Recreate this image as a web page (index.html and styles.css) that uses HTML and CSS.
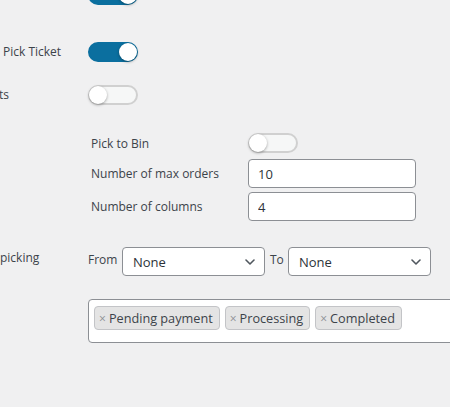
FILE: index.html
```html
<!DOCTYPE html>
<html>
<head>
<meta charset="utf-8">
<link rel="stylesheet" href="styles.css">
</head>
<body>
<div class="page">
  <div class="row row-top">
    <div class="label"></div>
    <div class="ctl"><span class="toggle on"></span></div>
  </div>
  <div class="row row-b">
    <div class="label label-pick">Pick Ticket</div>
    <div class="ctl"><span class="toggle on"></span></div>
  </div>
  <div class="row row-c">
    <div class="label label-ts">ts</div>
    <div class="ctl"><span class="toggle"></span></div>
  </div>
  <div class="row row-d">
    <div class="label"></div>
    <div class="ctl">
      <div class="sub">
        <div class="sub-label first">Pick to Bin</div>
        <div class="sub-ctl first"><span class="toggle"></span></div>
        <div class="sub-label">Number of max orders</div>
        <div class="sub-ctl"><input class="text" type="text" value="10"></div>
        <div class="sub-label">Number of columns</div>
        <div class="sub-ctl"><input class="text" type="text" value="4"></div>
      </div>
    </div>
  </div>
  <div class="row row-e">
    <div class="label label-picking">picking</div>
    <div class="ctl range">
      <span class="range-label from">From</span>
      <div class="select"><span>None</span>
        <svg class="chev" width="10" height="6" viewBox="0 0 10 6"><path d="M1 1 L5 5 L9 1" fill="none" stroke="#50575e" stroke-width="1.6" stroke-linecap="round" stroke-linejoin="round"/></svg>
      </div>
      <span class="range-label to">To</span>
      <div class="select"><span>None</span>
        <svg class="chev" width="10" height="6" viewBox="0 0 10 6"><path d="M1 1 L5 5 L9 1" fill="none" stroke="#50575e" stroke-width="1.6" stroke-linecap="round" stroke-linejoin="round"/></svg>
      </div>
    </div>
  </div>
  <div class="row row-f">
    <div class="label"></div>
    <div class="ctl">
      <div class="multi">
        <span class="tag"><span class="x">×</span>Pending payment</span>
        <span class="tag"><span class="x">×</span>Processing</span>
        <span class="tag"><span class="x">×</span>Completed</span>
      </div>
    </div>
  </div>
</div>
</body>
</html>
```

FILE: styles.css
```css
html, body {
  margin: 0;
  padding: 0;
  background: #f0f0f1;
  overflow: hidden;
}
body {
  font-family: "Open Sans", "Noto Sans", sans-serif;
  font-size: 12px;
  color: #3c434a;
}
.page {
  width: 450px;
  height: 407px;
  overflow: hidden;
}
.row {
  display: grid;
  grid-template-columns: 88px 1fr;
  align-items: center;
}
.row-top { margin-top: -15px; }
.row-b { margin-top: 37px; }
.row-c { margin-top: 23px; }
.row-d { margin-top: 28px; align-items: start; }
.row-e { margin-top: 26px; }
.row-f { margin-top: 23px; }

.label {
  white-space: nowrap;
  line-height: 20px;
}
.label-pick { padding-left: 3px; }
.label-ts { margin-left: -1px; }
.label-picking { margin-top: -8px; }

.ctl {
  min-width: 0;
  display: flex;
  align-items: center;
}

.toggle {
  display: block;
  position: relative;
  width: 50px;
  height: 20px;
  box-sizing: border-box;
  border-radius: 10px;
  background: #f6f7f7;
  border: 2px solid #d0d0d0;
}
.toggle::after {
  content: "";
  position: absolute;
  top: -1px;
  left: -1px;
  width: 18px;
  height: 18px;
  border-radius: 50%;
  background: #fff;
  box-shadow: 0 1px 3px rgba(0,0,0,0.35);
}
.toggle.on {
  background: #0b6f9f;
  border-color: #0b6f9f;
}
.toggle.on::after {
  left: auto;
  right: -1px;
}

.sub {
  display: grid;
  grid-template-columns: 157px 168px;
  row-gap: 4px;
  margin-left: 3px;
  align-items: center;
}
.sub-label {
  white-space: nowrap;
}
.sub-ctl { display: flex; }
.first { margin-bottom: 2px; }
.text {
  width: 168px;
  height: 29px;
  box-sizing: border-box;
  border: 1px solid #8c8f94;
  border-radius: 4px;
  background: #fff;
  padding: 0 9px;
  font-family: inherit;
  font-size: 13px;
  color: #2c3338;
}

.range-label {
  font-size: 12px;
  box-sizing: border-box;
  flex: none;
  margin-top: -4px;
}
.range-label.from { width: 34px; }
.range-label.to { width: 23px; padding-left: 5px; }
.select {
  width: 143px;
  height: 29px;
  box-sizing: border-box;
  border: 1px solid #8c8f94;
  border-radius: 4px;
  background: #fff;
  display: flex;
  align-items: center;
  justify-content: space-between;
  padding: 0 9px 0 10px;
  font-size: 13px;
  color: #2c3338;
  flex: none;
}
.select .chev { flex: none; }

.multi {
  width: 380px;
  height: 44px;
  box-sizing: border-box;
  border: 1px solid #8c8f94;
  border-radius: 4px;
  background: #fff;
  display: flex;
  align-items: flex-start;
  gap: 5px;
  padding: 6px 5px;
  flex: none;
}
.tag {
  height: 24px;
  box-sizing: border-box;
  display: flex;
  align-items: center;
  background: #e4e4e4;
  border: 1px solid #c3c4c7;
  border-radius: 4px;
  padding: 0 6px 0 4px;
  font-size: 12.7px;
  color: #3c434a;
  white-space: nowrap;
}
.tag .x {
  color: #8c8f94;
  font-size: 12px;
  margin-right: 3px;
}
```
